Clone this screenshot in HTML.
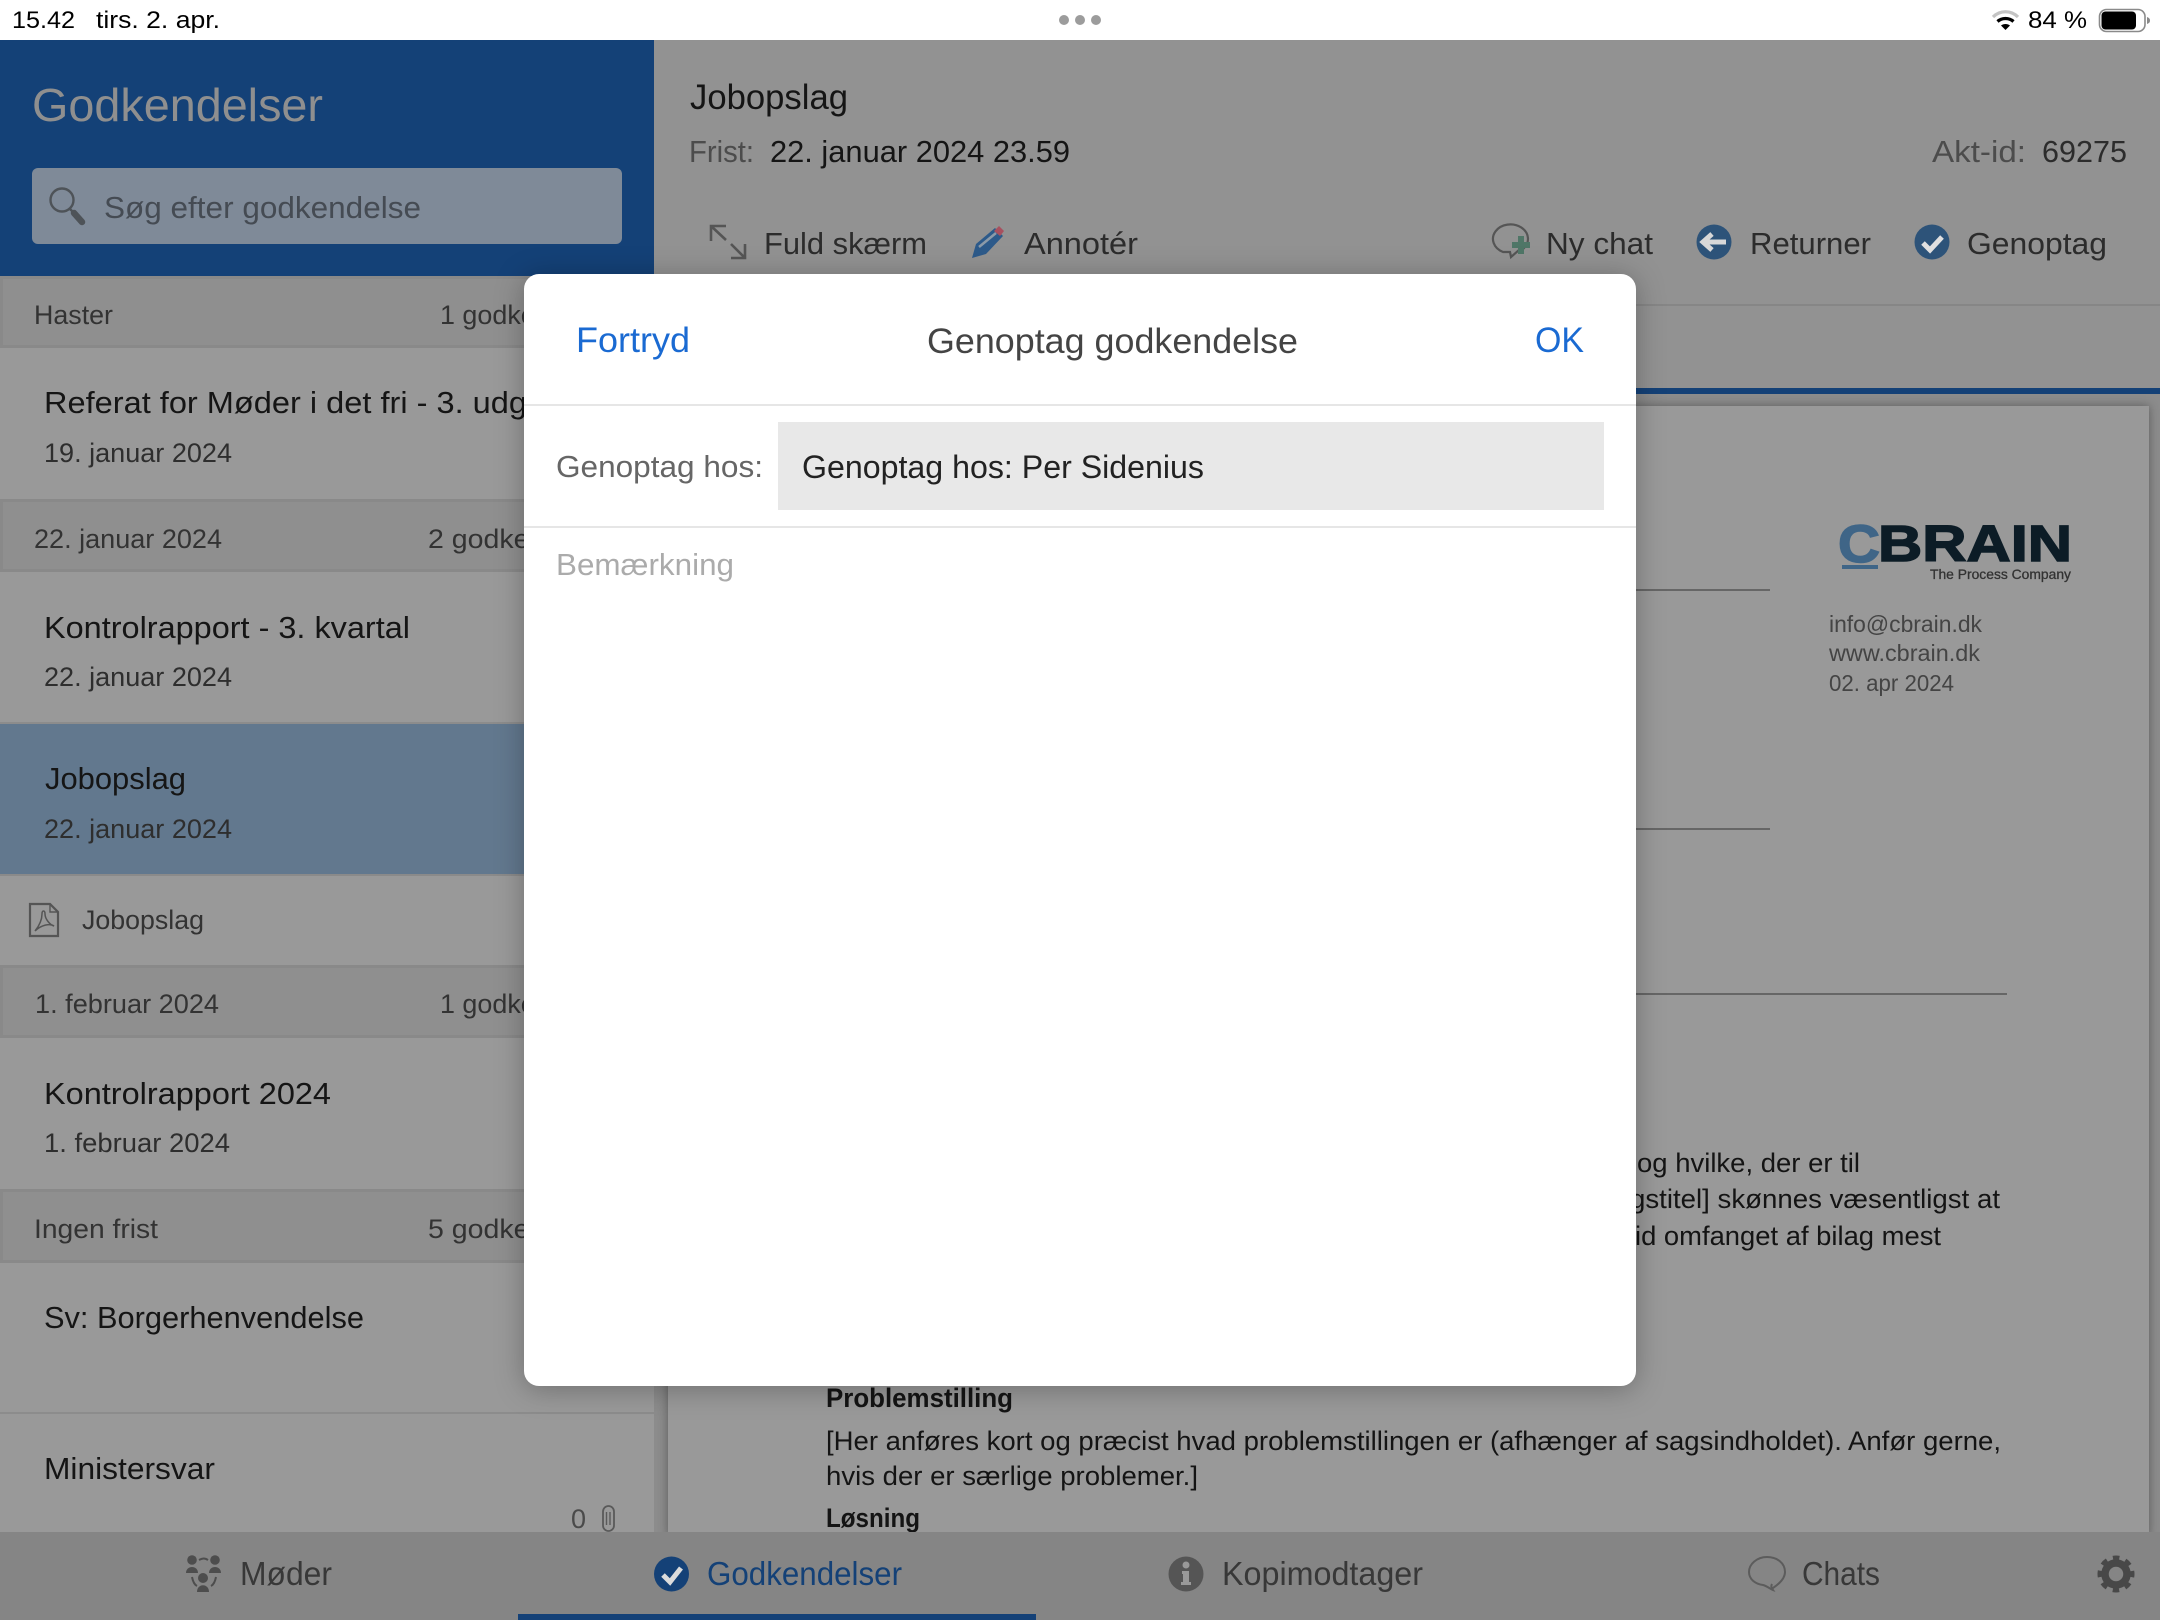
<!DOCTYPE html>
<html lang="da">
<head>
<meta charset="utf-8">
<title>Godkendelser</title>
<style>
html,body{margin:0;padding:0;background:#fff;width:2160px;height:1620px;overflow:hidden}
svg{display:block;position:absolute;left:0;top:0}
text{font-family:"Liberation Sans",sans-serif;white-space:pre}
.t{font-size:31px;fill:#151515}
.d{font-size:27px;fill:#2e2e2e}
.h{font-size:27px;fill:#333}
.b{font-size:27px;fill:#141414}
.tb{font-size:31px;fill:#2c2c2c}
.tab{font-size:33px;fill:#383838}
</style>
</head>
<body>
<svg width="2160" height="1620" viewBox="0 0 2160 1620" xmlns="http://www.w3.org/2000/svg">
<rect width="2160" height="1620" fill="#929292"/>

<!-- right document area -->
<rect x="654" y="394" width="1506" height="1140" fill="#8c8c8c"/>
<rect x="668" y="406" width="1481" height="1130" fill="#999999" style="filter:drop-shadow(0 0 5px rgba(0,0,0,.35))"/>
<rect x="654" y="388" width="1506" height="6" fill="#144177"/>
<rect x="654" y="304" width="1506" height="2" fill="#868686"/>

<!-- doc lines -->
<rect x="1200" y="589" width="570" height="2" fill="#666"/>
<rect x="1200" y="828" width="570" height="2" fill="#666"/>
<rect x="1200" y="993" width="807" height="2" fill="#666"/>

<!-- logo -->
<text x="1838" y="562" font-size="53" font-weight="700" fill="#3f6587" stroke="#3f6587" stroke-width="1.5" textLength="42" lengthAdjust="spacingAndGlyphs">C</text>
<text x="1878" y="561" font-size="51" font-weight="700" fill="#0c1c26" stroke="#0c1c26" stroke-width="1.5" textLength="194" lengthAdjust="spacingAndGlyphs">BRAIN</text>
<rect x="1842" y="565" width="36" height="4" fill="#3f6587"/>
<text x="1930" y="579" font-size="14" fill="#333" stroke="#333" stroke-width=".3" textLength="141" lengthAdjust="spacingAndGlyphs">The Process Company</text>
<text x="1829" y="632" font-size="23" fill="#444" textLength="153" lengthAdjust="spacingAndGlyphs">info@cbrain.dk</text>
<text x="1829" y="661" font-size="23" fill="#444" textLength="151" lengthAdjust="spacingAndGlyphs">www.cbrain.dk</text>
<text x="1829" y="691" font-size="23" fill="#444" textLength="125" lengthAdjust="spacingAndGlyphs">02. apr 2024</text>

<!-- doc body -->
<text class="b" x="1637" y="1172" textLength="223" lengthAdjust="spacingAndGlyphs">og hvilke, der er til</text>
<text class="b" x="1630" y="1208" textLength="370" lengthAdjust="spacingAndGlyphs">gstitel] skønnes væsentligst at</text>
<text class="b" x="1635" y="1245" textLength="306" lengthAdjust="spacingAndGlyphs">id omfanget af bilag mest</text>
<text class="b" x="826" y="1407" font-weight="700" textLength="187" lengthAdjust="spacingAndGlyphs">Problemstilling</text>
<text class="b" x="826" y="1450" textLength="1175" lengthAdjust="spacingAndGlyphs">[Her anføres kort og præcist hvad problemstillingen er (afhænger af sagsindholdet). Anfør gerne,</text>
<text class="b" x="826" y="1485" textLength="372" lengthAdjust="spacingAndGlyphs">hvis der er særlige problemer.]</text>
<text class="b" x="826" y="1527" font-weight="700" textLength="94" lengthAdjust="spacingAndGlyphs">Løsning</text>

<!-- right header -->
<text x="690" y="109" font-size="35" fill="#151515" textLength="158" lengthAdjust="spacingAndGlyphs">Jobopslag</text>
<text x="689" y="162" font-size="31" fill="#4c4c4c" textLength="65" lengthAdjust="spacingAndGlyphs">Frist:</text>
<text x="770" y="162" font-size="31" fill="#151515" textLength="300" lengthAdjust="spacingAndGlyphs">22. januar 2024 23.59</text>
<text x="1932" y="162" font-size="31" fill="#4c4c4c" textLength="94" lengthAdjust="spacingAndGlyphs">Akt-id:</text>
<text x="2042" y="162" font-size="31" fill="#2c2c2c" textLength="85" lengthAdjust="spacingAndGlyphs">69275</text>

<!-- toolbar -->
<g fill="none" stroke="#555" stroke-width="2.6">
<path d="M726 226H711V241M711 226L726 240"/>
<path d="M745 244V258H731M745 258L731 244"/>
</g>
<text class="tb" x="764" y="254" textLength="163" lengthAdjust="spacingAndGlyphs">Fuld skærm</text>
<path d="M972 258L976 244L995 228L1003 236L986 254Z" fill="#2d5a8a"/>
<path d="M979 247L996 233" stroke="#8c9aa8" stroke-width="2.5" fill="none"/>
<path d="M994 231L999 226L1004 231L1000 236Z" fill="#a8505f"/>
<text class="tb" x="1024" y="254" textLength="114" lengthAdjust="spacingAndGlyphs">Annotér</text>
<path d="M1523 249A17.5 14.5 0 1 0 1503 252L1510 252L1511 257L1519 250" fill="none" stroke="#555" stroke-width="2.2"/>
<path d="M1521 236V254M1512 245H1530" stroke="#4f7667" stroke-width="6" fill="none"/>
<text class="tb" x="1546" y="254" textLength="107" lengthAdjust="spacingAndGlyphs">Ny chat</text>
<circle cx="1714" cy="242" r="17.5" fill="#2d5379"/>
<path d="M1726 242H1705M1712 234L1703 242L1712 250" fill="none" stroke="#d8d8d8" stroke-width="5"/>
<text class="tb" x="1750" y="254" textLength="121" lengthAdjust="spacingAndGlyphs">Returner</text>
<circle cx="1932" cy="242" r="17.5" fill="#2d5379"/>
<path d="M1923 243L1930 250L1942 237" fill="none" stroke="#e0e0e0" stroke-width="5"/>
<text class="tb" x="1967" y="254" textLength="140" lengthAdjust="spacingAndGlyphs">Genoptag</text>

<!-- left list -->
<rect x="0" y="276" width="654" height="1258" fill="#999999"/>
<g fill="#8f8f8f" stroke="#898989" stroke-width="3">
<rect x="1.5" y="277.5" width="660" height="69"/>
<rect x="1.5" y="500.5" width="660" height="70"/>
<rect x="1.5" y="966.5" width="660" height="70"/>
<rect x="1.5" y="1190.5" width="660" height="71"/>
</g>
<text class="h" x="34" y="324" textLength="79" lengthAdjust="spacingAndGlyphs">Haster</text>
<text class="h" x="440" y="324" font-size="28" textLength="175" lengthAdjust="spacingAndGlyphs">1 godkendelse</text>
<text class="t" x="44" y="413" textLength="483" lengthAdjust="spacingAndGlyphs">Referat for Møder i det fri - 3. udg</text>
<text class="d" x="44" y="462" textLength="188" lengthAdjust="spacingAndGlyphs">19. januar 2024</text>
<text class="h" x="34" y="548" textLength="188" lengthAdjust="spacingAndGlyphs">22. januar 2024</text>
<text class="h" x="428" y="548" textLength="195" lengthAdjust="spacingAndGlyphs">2 godkendelser</text>
<text class="t" x="44" y="638" textLength="366" lengthAdjust="spacingAndGlyphs">Kontrolrapport - 3. kvartal</text>
<text class="d" x="44" y="686" textLength="188" lengthAdjust="spacingAndGlyphs">22. januar 2024</text>

<rect x="0" y="723" width="654" height="152" fill="#62788e"/>
<rect x="0" y="722" width="654" height="2" fill="#8c8c8c"/>
<rect x="0" y="874" width="654" height="2" fill="#8a8a8a"/>
<text class="t" x="45" y="789" textLength="141" lengthAdjust="spacingAndGlyphs">Jobopslag</text>
<text class="d" x="44" y="838" textLength="188" lengthAdjust="spacingAndGlyphs">22. januar 2024</text>

<path d="M30 904H50L58 912V936H30Z" fill="none" stroke="#555" stroke-width="2.2"/>
<path d="M50 904V912H58" fill="none" stroke="#555" stroke-width="1.4"/>
<path d="M35 931C39 926 42 920 42 914C42 910 45 910 45 914C45 919 50 925 54 926C50 923 41 925 35 931Z" fill="none" stroke="#555" stroke-width="1.5"/>
<text x="82" y="929" font-size="27" fill="#333" textLength="122" lengthAdjust="spacingAndGlyphs">Jobopslag</text>

<text class="h" x="35" y="1013" textLength="184" lengthAdjust="spacingAndGlyphs">1. februar 2024</text>
<text class="h" x="440" y="1013" textLength="175" lengthAdjust="spacingAndGlyphs">1 godkendelse</text>
<text class="t" x="44" y="1104" textLength="287" lengthAdjust="spacingAndGlyphs">Kontrolrapport 2024</text>
<text class="d" x="44" y="1152" textLength="186" lengthAdjust="spacingAndGlyphs">1. februar 2024</text>
<text class="h" x="34" y="1238" textLength="124" lengthAdjust="spacingAndGlyphs">Ingen frist</text>
<text class="h" x="428" y="1238" textLength="195" lengthAdjust="spacingAndGlyphs">5 godkendelser</text>
<text class="t" x="44" y="1328" textLength="320" lengthAdjust="spacingAndGlyphs">Sv: Borgerhenvendelse</text>
<rect x="0" y="1412" width="654" height="2" fill="#8c8c8c"/>
<text class="t" x="44" y="1479" textLength="171" lengthAdjust="spacingAndGlyphs">Ministersvar</text>
<text x="571" y="1528" font-size="27" fill="#4a4a4a">0</text>
<rect x="603" y="1506" width="11" height="25" rx="5.5" fill="none" stroke="#5a5a5a" stroke-width="1.8"/>
<path d="M606.5 1512V1525M610 1512V1525" stroke="#5a5a5a" stroke-width="1.4" fill="none"/>

<!-- blue header -->
<rect x="0" y="40" width="654" height="236" fill="#144177"/>
<text x="32" y="121" font-size="46" fill="#8f8f8f" textLength="291" lengthAdjust="spacingAndGlyphs">Godkendelser</text>
<rect x="32" y="168" width="590" height="76" rx="6" fill="#7f8a98"/>
<circle cx="62" cy="200" r="11.5" fill="none" stroke="#4e5358" stroke-width="2.4"/>
<path d="M70 209L74 213" stroke="#4e5358" stroke-width="2.4"/>
<path d="M74 213L82 222" stroke="#4e5358" stroke-width="6.5" stroke-linecap="round"/>
<text x="104" y="218" font-size="31" fill="#454b53" textLength="317" lengthAdjust="spacingAndGlyphs">Søg efter godkendelse</text>

<!-- tab bar -->
<rect x="0" y="1532" width="2160" height="88" fill="#858585"/>
<g fill="#4d4d4d">
<circle cx="192" cy="1560" r="4.8"/><path d="M186 1573C186 1565 198 1565 198 1573Z"/>
<circle cx="215" cy="1560" r="4.8"/><path d="M209 1573C209 1565 221 1565 221 1573Z"/>
<circle cx="203" cy="1578" r="5"/><path d="M197 1592C197 1583 209 1583 209 1592Z"/>
</g>
<path d="M199 1560C203 1558 205 1558 208 1560M192 1577C193 1582 195 1585 197 1586M216 1577C215 1582 213 1585 211 1586" fill="none" stroke="#4d4d4d" stroke-width="2"/>
<text class="tab" x="240" y="1585" textLength="92" lengthAdjust="spacingAndGlyphs">Møder</text>
<circle cx="671.500" cy="1574" r="17.500" fill="#144177"/>
<path d="M663 1575L670 1582L681 1568" fill="none" stroke="#dcdcdc" stroke-width="5"/>
<text class="tab" x="707" y="1585" style="fill:#144177" textLength="195" lengthAdjust="spacingAndGlyphs">Godkendelser</text>
<rect x="518" y="1614" width="518" height="6" fill="#144177"/>
<circle cx="1186" cy="1574" r="17.500" fill="#555"/>
<circle cx="1186" cy="1565" r="3.500" fill="#999"/>
<path d="M1182 1571H1189V1582H1191V1585H1181V1582H1183V1574H1182Z" fill="#999"/>
<text class="tab" x="1222" y="1585" textLength="201" lengthAdjust="spacingAndGlyphs">Kopimodtager</text>
<path d="M1773 1588C1782 1582 1785 1577 1785 1572C1785 1563 1777 1557 1767 1557C1757 1557 1749 1564 1749 1572C1749 1579 1755 1584 1763 1585C1767 1586 1770 1589 1773 1590C1771 1587 1771 1586 1772 1584" fill="none" stroke="#5c5c5c" stroke-width="2"/>
<text class="tab" x="1802" y="1585" textLength="78" lengthAdjust="spacingAndGlyphs">Chats</text>
<circle cx="2116" cy="1574" r="11" fill="none" stroke="#484848" stroke-width="7.500"/>
<circle cx="2116" cy="1574" r="16" fill="none" stroke="#484848" stroke-width="5" stroke-dasharray="6.300 6.270" stroke-dashoffset="3.150"/>

<!-- status bar -->
<rect x="0" y="0" width="2160" height="40" fill="#ffffff"/>
<text x="12" y="28" font-size="24" fill="#000" textLength="63" lengthAdjust="spacingAndGlyphs">15.42</text>
<text x="96" y="28" font-size="24" fill="#000" textLength="124" lengthAdjust="spacingAndGlyphs">tirs. 2. apr.</text>
<circle cx="1064" cy="20" r="5" fill="#9c9c9c"/><circle cx="1080" cy="20" r="5" fill="#9c9c9c"/><circle cx="1096" cy="20" r="5" fill="#9c9c9c"/>
<path d="M1993 17C2000 10 2011 10 2018 17" fill="none" stroke="#c4c4c4" stroke-width="3.200"/>
<path d="M1997.500 21.500C2002 17.500 2009 17.500 2013.500 21.500" fill="none" stroke="#000" stroke-width="3.200"/>
<path d="M2001 25.500C2003.500 23.500 2007.500 23.500 2010 25.500L2005.500 30Z" fill="#000"/>
<text x="2028" y="28" font-size="24" fill="#000" textLength="59" lengthAdjust="spacingAndGlyphs">84 %</text>
<rect x="2099.500" y="9.500" width="45.500" height="22" rx="7" fill="none" stroke="#8a8a8a" stroke-width="1.600"/>
<rect x="2101.500" y="11.500" width="34.500" height="18" rx="4" fill="#000"/>
<path d="M2147 17C2149.500 18 2150 19 2150 20.500C2150 22 2149.500 23 2147 24Z" fill="#8a8a8a"/>

<!-- dialog -->
<rect x="524" y="274" width="1112" height="1112" rx="15" fill="#ffffff" style="filter:drop-shadow(0 3px 14px rgba(0,0,0,.28))"/>
<text x="576" y="352" font-size="35" fill="#1a6ad2" textLength="114" lengthAdjust="spacingAndGlyphs">Fortryd</text>
<text x="927" y="353" font-size="35" fill="#444" textLength="371" lengthAdjust="spacingAndGlyphs">Genoptag godkendelse</text>
<text x="1535" y="352" font-size="35" fill="#1a6ad2" textLength="49" lengthAdjust="spacingAndGlyphs">OK</text>
<rect x="524" y="404" width="1112" height="2" fill="#e6e6e6"/>
<text x="556" y="477" font-size="31" fill="#666" textLength="207" lengthAdjust="spacingAndGlyphs">Genoptag hos:</text>
<rect x="778" y="422" width="826" height="88" fill="#e8e8e8"/>
<text x="802" y="478" font-size="32" fill="#222" textLength="402" lengthAdjust="spacingAndGlyphs">Genoptag hos: Per Sidenius</text>
<rect x="524" y="526" width="1112" height="2" fill="#e6e6e6"/>
<text x="556" y="575" font-size="31" fill="#ababab" textLength="178" lengthAdjust="spacingAndGlyphs">Bemærkning</text>
</svg>
</body>
</html>
